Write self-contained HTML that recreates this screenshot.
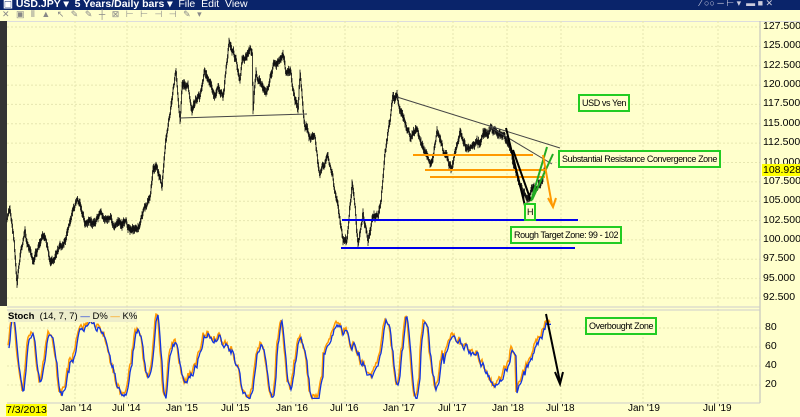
<!DOCTYPE html>
<html><head><meta charset="utf-8"><style>
body{margin:0;width:800px;height:417px;overflow:hidden;background:#ffffcc;font-family:"Liberation Sans",sans-serif;position:relative}
.t{position:absolute;font-size:11px;color:#000;white-space:nowrap}
.box{position:absolute;border:2px solid #22cc22;background:#ffffcc;font-size:9px;letter-spacing:-0.4px;padding:1px 2px;line-height:12px;white-space:nowrap}
</style></head><body>
<div style="position:absolute;left:0;top:0;width:800px;height:10px;background:#0a246a"></div>
<div class="t" style="left:3px;top:-2px;color:#fff;font-size:10.5px;font-weight:bold">▣ USD.JPY ▾ &nbsp;5 Years/Daily bars ▾ &nbsp;<span style="font-weight:normal">File &nbsp;Edit &nbsp;View</span></div>
<div class="t" style="left:700px;top:-2px;color:#ccd;font-size:9px">⁄ ○○ ─ ⊢ ▾ &nbsp;▬ ■ ✕</div>
<div style="position:absolute;left:0;top:10px;width:800px;height:11px;background:#ffffcc;border-bottom:1px solid #ddd"></div>
<div class="t" style="left:2px;top:9px;color:#888;font-size:9px;letter-spacing:2px">✕ ▣ ⫴ ▲ ↖ ✎ ✎ ┼ ⊠ ⊢ ⊢ ⊣ ⊣ ✎ ▾</div>
<div style="position:absolute;left:0;top:21px;width:7px;height:285px;background:#333"></div>
<svg width="800" height="417" style="position:absolute;left:0;top:0" id="s">
<g stroke="#e6e6b0" stroke-dasharray="2,2" stroke-width="1" id="grid"></g>
<line x1="760" y1="21" x2="760" y2="403" stroke="#bbb"/>
<line x1="7" y1="307" x2="760" y2="307" stroke="#ccc"/>
<line x1="7" y1="310" x2="760" y2="310" stroke="#ccc"/>
<line x1="7" y1="403" x2="760" y2="403" stroke="#ccc"/>
<path id="price" fill="none" stroke="#111" stroke-width="0.8"/>
<line x1="180" y1="118" x2="307" y2="114" stroke="#444"/>
<line x1="397" y1="97" x2="560" y2="148" stroke="#444"/>
<line x1="490" y1="127" x2="552" y2="164" stroke="#444"/>
<line x1="342" y1="220" x2="578" y2="220" stroke="#0000ee" stroke-width="2"/>
<line x1="341" y1="248" x2="575" y2="248" stroke="#0000ee" stroke-width="2"/>
<line x1="413" y1="155" x2="533" y2="155" stroke="#ff9900" stroke-width="2"/>
<line x1="425" y1="170" x2="545" y2="170" stroke="#ff9900" stroke-width="2"/>
<line x1="430" y1="177" x2="545" y2="177" stroke="#ff9900" stroke-width="2"/>
<polyline points="506,128 527,214" fill="none" stroke="#000" stroke-width="2"/>
<polyline points="513,150 531,201" fill="none" stroke="#000" stroke-width="2"/>
<line x1="531" y1="201" x2="547" y2="147" stroke="#22aa22" stroke-width="2"/>
<line x1="532" y1="200" x2="553" y2="154" stroke="#22aa22" stroke-width="2"/>
<line x1="543" y1="155" x2="552" y2="205" stroke="#ff9900" stroke-width="2"/>
<polyline points="548,198 553,207 556,198" fill="none" stroke="#ff9900" stroke-width="2"/>
<polyline id="kk" fill="none" stroke="#ff9900" stroke-width="1.5"/>
<polyline id="dd" fill="none" stroke="#1133dd" stroke-width="1.3"/>
<line x1="546" y1="314" x2="560" y2="382" stroke="#000" stroke-width="2"/>
<polyline points="555,372 560,384 563,372" fill="none" stroke="#000" stroke-width="2"/>
</svg>
<div id="lab"></div>
<div class="t" style="left:8px;top:311px;font-size:9.5px;background:#eeeecc"><b>Stoch</b> &nbsp;(14, 7, 7) <span style="color:#1133dd">—</span> D% <span style="color:#ff9900">—</span> K%</div>
<div class="box" style="left:578px;top:94px">USD vs Yen</div>
<div class="box" style="left:558px;top:150px">Substantial Resistance Convergence Zone</div>
<div class="box" style="left:524px;top:203px;padding:1px 1px">H</div>
<div class="box" style="left:510px;top:226px">Rough Target Zone: 99 - 102</div>
<div class="box" style="left:585px;top:317px">Overbought Zone</div>
<div class="t" style="left:762px;top:164px;background:#ffff00;font-size:10.5px;padding:0 1px">108.928</div>
<div class="t" style="left:6px;top:404px;background:#ffff00;font-size:10.5px">7/3/2013</div>
<script>
function y(p){return 27+(127.5-p)*7.743}
var g=document.getElementById('grid'),h='',L='';
for(var p=127.5;p>=92.5;p-=2.5){var yy=y(p);h+='<line x1="7" y1="'+yy+'" x2="760" y2="'+yy+'"/>';L+='<div class="t" style="left:763px;top:'+(yy-7)+'px;font-size:10.5px">'+p.toFixed(3)+'</div>';}
[20,40,60,80].forEach(function(v){var yy=385-(v-20)*19/20;h+='<line x1="7" y1="'+yy+'" x2="760" y2="'+yy+'"/>';L+='<div class="t" style="left:765px;top:'+(yy-7)+'px;font-size:10.5px">'+v+'</div>';});
var D=[["Jan '14",75],["Jul '14",127],["Jan '15",181],["Jul '15",236],["Jan '16",291],["Jul '16",345],["Jan '17",398],["Jul '17",453],["Jan '18",507],["Jul '18",561],["Jan '19",643],["Jul '19",718]];
D.forEach(function(d){h+='<line x1="'+d[1]+'" y1="21" x2="'+d[1]+'" y2="403"/>';L+='<div class="t" style="left:'+(d[1]-15)+'px;top:403px;font-size:10px">'+d[0]+'</div>';});
g.innerHTML=h;document.getElementById('lab').innerHTML=L;
var K=[[7,220],[10,212],[14,240],[17,288],[20,260],[25,232],[33,265],[43,240],[50,263],[57,250],[65,245],[70,222],[77,200],[80,205],[85,225],[100,222],[115,225],[130,230],[140,222],[145,212],[150,200],[153,167],[157,165],[162,188],[166,140],[172,100],[176,72],[180,117],[182,80],[188,85],[192,115],[196,100],[200,98],[205,72],[210,85],[215,95],[220,92],[224,90],[226,70],[229,40],[233,52],[237,65],[240,80],[242,55],[248,50],[250,47],[252,55],[253,115],[256,70],[262,85],[266,90],[270,73],[275,60],[280,62],[283,60],[286,80],[290,75],[295,100],[298,110],[300,72],[303,110],[305,130],[310,135],[315,140],[320,178],[328,155],[337,198],[343,245],[347,240],[352,185],[355,205],[358,240],[363,210],[368,240],[372,220],[378,215],[381,200],[385,150],[390,120],[393,100],[397,97],[403,120],[410,135],[417,130],[425,155],[430,170],[437,135],[445,160],[452,170],[460,130],[467,150],[472,140],[480,140],[490,128],[498,133],[505,140],[512,155],[518,180],[524,195],[528,202],[532,195],[537,185],[542,178],[545,170]];
var s=7,r=function(){s=(s*9301+49297)%233280;return s/233280-0.5};
var d='',w=0,prev=null;for(var i=0;i<K.length-1;i++){var a=K[i],b=K[i+1];for(var x=a[0];x<b[0];x+=0.5){var t=(x-a[0])/(b[0]-a[0]);w=w*0.9+r()*5;var c=a[1]+(b[1]-a[1])*t+w;var hh=2+Math.abs(r())*5;var y1=c-hh,y2=c+hh;if(prev!==null){y1=Math.min(y1,prev);y2=Math.max(y2,prev);}prev=c;d+='M'+x.toFixed(1)+' '+y1.toFixed(1)+'V'+y2.toFixed(1);}}
document.getElementById('price').setAttribute('d',d);
var kp=[],dp=[],ph=0,A=40,C=55,n=0;
for(var x=8;x<=550;x+=1){var dph=0.2+0.15*Math.sin(x*0.05)+r()*0.2;ph+=dph;if(ph>6.283){ph-=6.283;A=20+Math.abs(r())*50;C=45+r()*25;}
n=n*0.8+r()*8;var v=C+A*Math.sin(ph)+n;v=Math.max(8,Math.min(96,v));
if(x>515)v=15+(x-515)*2.3+r()*8;if(x>545)v=86;
var yy=404-v*0.95;kp.push(x.toFixed(1)+','+(yy+r()*4).toFixed(1));dp.push((x+1).toFixed(1)+','+(yy+2).toFixed(1));}
document.getElementById('kk').setAttribute('points',kp.join(' '));
document.getElementById('dd').setAttribute('points',dp.join(' '));
</script>
</body></html>
